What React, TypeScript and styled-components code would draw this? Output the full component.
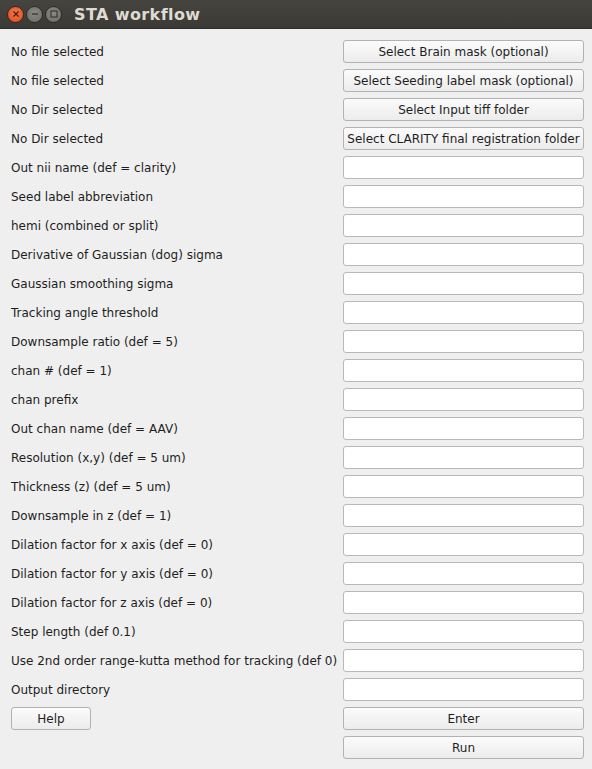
import styled, { createGlobalStyle } from 'styled-components';

const GlobalStyle = createGlobalStyle`
  html, body {
    margin: 0;
    padding: 0;
    background: #efefef;
  }
`;

const buttonRows = [
  { label: 'No file selected', action: 'Select Brain mask (optional)' },
  { label: 'No file selected', action: 'Select Seeding label mask (optional)' },
  { label: 'No Dir selected', action: 'Select Input tiff folder' },
  { label: 'No Dir selected', action: 'Select CLARITY final registration folder' },
];

const fieldRows = [
  'Out nii name (def = clarity)',
  'Seed label abbreviation',
  'hemi (combined or split)',
  'Derivative of Gaussian (dog) sigma',
  'Gaussian smoothing sigma',
  'Tracking angle threshold',
  'Downsample ratio (def = 5)',
  'chan # (def = 1)',
  'chan prefix',
  'Out chan name (def = AAV)',
  'Resolution (x,y) (def = 5 um)',
  'Thickness (z) (def = 5 um)',
  'Downsample in z (def = 1)',
  'Dilation factor for x axis (def = 0)',
  'Dilation factor for y axis (def = 0)',
  'Dilation factor for z axis (def = 0)',
  'Step length (def 0.1)',
  'Use 2nd order range-kutta method for tracking (def 0)',
  'Output directory',
];

export default function App() {
  return (
    <Window>
      <GlobalStyle />
      <TitleBar>
        <WinButtons>
          <WinButton $kind="close">
            <svg width="8" height="8" viewBox="0 0 8 8">
              <path d="M1.5 1.5 L6.5 6.5 M6.5 1.5 L1.5 6.5" stroke="#4a1a0a" strokeWidth="1.2" />
            </svg>
          </WinButton>
          <WinButton $kind="min">
            <svg width="8" height="8" viewBox="0 0 8 8">
              <path d="M1 4 H7" stroke="#3a3a36" strokeWidth="1.4" />
            </svg>
          </WinButton>
          <WinButton $kind="max">
            <svg width="8" height="8" viewBox="0 0 8 8">
              <rect x="1" y="1" width="6" height="6" fill="none" stroke="#3a3a36" strokeWidth="1.2" />
            </svg>
          </WinButton>
        </WinButtons>
        <Title>STA workflow</Title>
      </TitleBar>
      <Form>
        {buttonRows.map((r, i) => (
          <Row key={i}>
            <Label>{r.label}</Label>
            <PushButton>{r.action}</PushButton>
          </Row>
        ))}
        {fieldRows.map((label) => (
          <Row key={label}>
            <Label>{label}</Label>
            <Field type="text" />
          </Row>
        ))}
        <Row>
          <PushButton $small>Help</PushButton>
          <PushButton>Enter</PushButton>
        </Row>
        <Row>
          <span />
          <PushButton>Run</PushButton>
        </Row>
      </Form>
    </Window>
  );
}

const Window = styled.div`
  width: 592px;
  height: 769px;
  background: #efefef;
  font-family: 'DejaVu Sans', 'Liberation Sans', sans-serif;
  font-size: 12px;
  color: #1e1e1e;
  overflow: hidden;
`;

const TitleBar = styled.div`
  height: 29px;
  display: flex;
  align-items: center;
  background: linear-gradient(#45443f, #3b3a36);
  border-bottom: 1px solid #2e2d2a;
  box-sizing: border-box;
`;

const WinButtons = styled.div`
  display: flex;
  gap: 2px;
  padding-left: 7px;
`;

const WinButton = styled.div<{ $kind: 'close' | 'min' | 'max' }>`
  width: 17px;
  height: 17px;
  border-radius: 50%;
  display: flex;
  align-items: center;
  justify-content: center;
  box-sizing: border-box;
  border: 1px solid #2c2b28;
  background: ${(p) =>
    p.$kind === 'close'
      ? 'radial-gradient(circle at 50% 40%, #f5774a, #dd4a1c)'
      : 'radial-gradient(circle at 50% 40%, #8b8a85, #6a6964)'};
`;

const Title = styled.div`
  margin-left: 12px;
  color: #dfdbd2;
  font-weight: bold;
  font-size: 16px;
  letter-spacing: 0.4px;
`;

const Form = styled.div`
  display: flex;
  flex-direction: column;
  gap: 6px;
  padding: 11px 8px 0 11px;
`;

const Row = styled.div`
  display: grid;
  grid-template-columns: minmax(0, 1fr) 241px;
  align-items: center;
  height: 23px;
`;

const Label = styled.span`
  white-space: nowrap;
`;

const PushButton = styled.button<{ $small?: boolean }>`
  width: ${(p) => (p.$small ? '80px' : '241px')};
  height: 23px;
  padding: 0;
  box-sizing: border-box;
  border: 1px solid #b2b2b2;
  border-radius: 3px;
  background: linear-gradient(#fbfbfb, #ececec);
  font-family: inherit;
  font-size: 12px;
  color: #1e1e1e;
  white-space: nowrap;
`;

const Field = styled.input`
  width: 241px;
  height: 23px;
  box-sizing: border-box;
  border: 1px solid #b8b8b8;
  border-radius: 3px;
  background: #ffffff;
  font-family: inherit;
  font-size: 12px;
  outline: none;
`;
